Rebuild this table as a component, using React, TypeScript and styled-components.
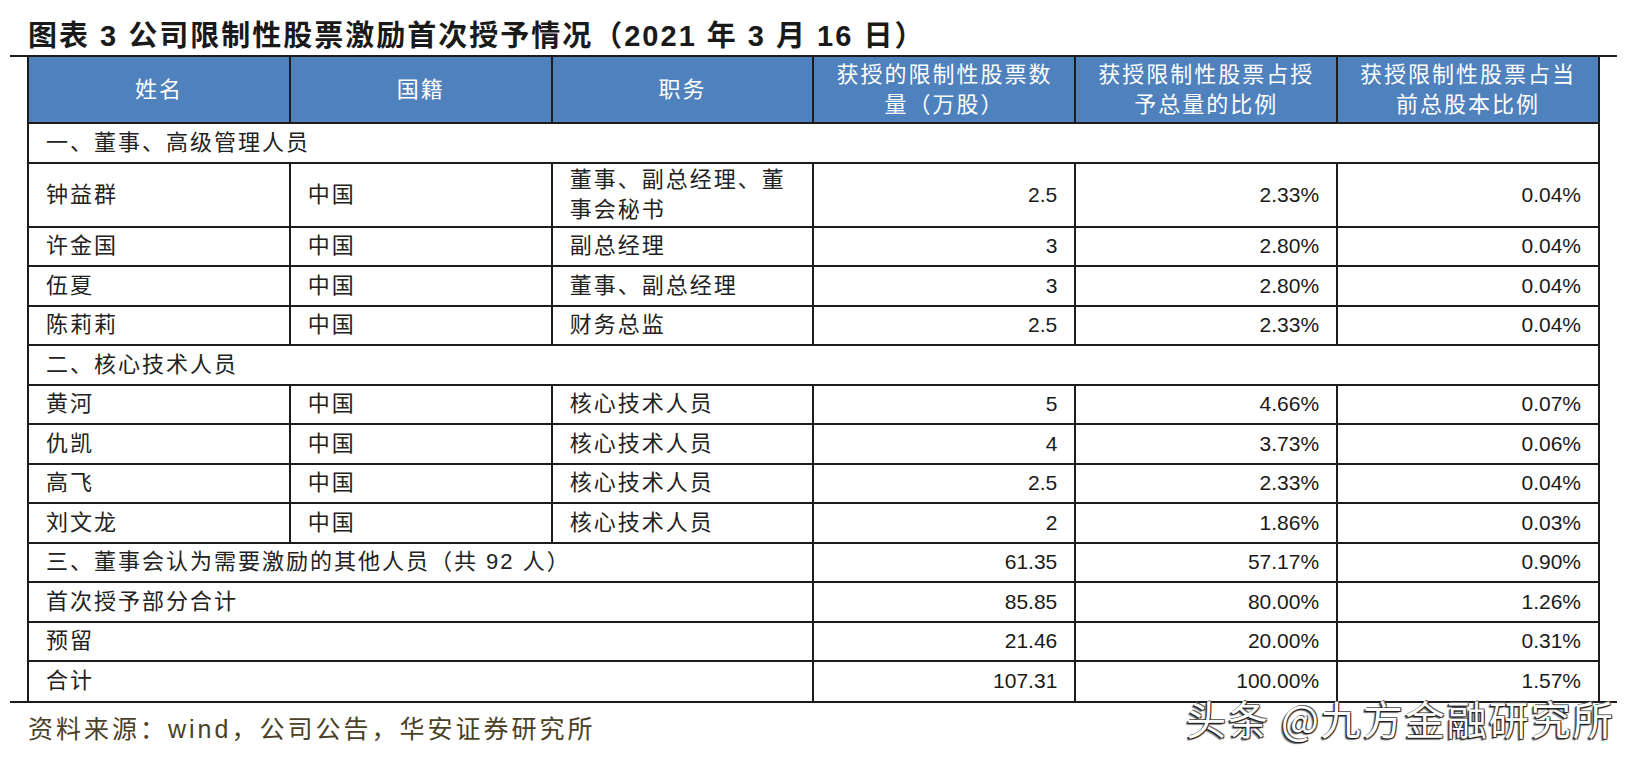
import React from 'react'
import styled, { createGlobalStyle } from 'styled-components'

type Person = {
  name: string;
  nation: string;
  job: string;
  shares: string;
  ofGrant: string;
  ofTotal: string;
}

type Total = {
  label: string;
  shares: string;
  ofGrant: string;
  ofTotal: string;
}

const managers: Person[] = [
  { name: '钟益群', nation: '中国', job: '董事、副总经理、董事会秘书', shares: '2.5', ofGrant: '2.33%', ofTotal: '0.04%' },
  { name: '许金国', nation: '中国', job: '副总经理', shares: '3', ofGrant: '2.80%', ofTotal: '0.04%' },
  { name: '伍夏', nation: '中国', job: '董事、副总经理', shares: '3', ofGrant: '2.80%', ofTotal: '0.04%' },
  { name: '陈莉莉', nation: '中国', job: '财务总监', shares: '2.5', ofGrant: '2.33%', ofTotal: '0.04%' },
]

const techStaff: Person[] = [
  { name: '黄河', nation: '中国', job: '核心技术人员', shares: '5', ofGrant: '4.66%', ofTotal: '0.07%' },
  { name: '仇凯', nation: '中国', job: '核心技术人员', shares: '4', ofGrant: '3.73%', ofTotal: '0.06%' },
  { name: '高飞', nation: '中国', job: '核心技术人员', shares: '2.5', ofGrant: '2.33%', ofTotal: '0.04%' },
  { name: '刘文龙', nation: '中国', job: '核心技术人员', shares: '2', ofGrant: '1.86%', ofTotal: '0.03%' },
]

const totals: Total[] = [
  { label: '三、董事会认为需要激励的其他人员（共 92 人）', shares: '61.35', ofGrant: '57.17%', ofTotal: '0.90%' },
  { label: '首次授予部分合计', shares: '85.85', ofGrant: '80.00%', ofTotal: '1.26%' },
  { label: '预留', shares: '21.46', ofGrant: '20.00%', ofTotal: '0.31%' },
  { label: '合计', shares: '107.31', ofGrant: '100.00%', ofTotal: '1.57%' },
]

const headers = [
  '姓名',
  '国籍',
  '职务',
  '获授的限制性股票数量（万股）',
  '获授限制性股票占授予总量的比例',
  '获授限制性股票占当前总股本比例',
]

const line = '#1c1c1c'

const GlobalStyle = createGlobalStyle`
  html, body {
    margin: 0;
    background: #fff;
  }
  body {
    font-family: "Liberation Sans", "Noto Sans CJK SC", sans-serif;
    color: #1f1f1f;
  }
`

const Page = styled.div`
  position: relative;
  width: 1629px;
  height: 765px;
  padding-top: 18px;
  box-sizing: border-box;
  overflow: hidden;
`

const Title = styled.h1`
  margin: 0 0 1px 28px;
  font-size: 29px;
  line-height: 36px;
  font-weight: 700;
  letter-spacing: 2px;
  color: #1a1a1a;
  white-space: nowrap;
`

const Frame = styled.div`
  margin: 0 12px 0 10px;
  padding: 0 17px;
  border-top: 2px solid ${line};
  border-bottom: 2px solid ${line};
`

const Table = styled.table`
  width: 100%;
  border-collapse: collapse;
  table-layout: fixed;

  tbody tr:last-child td {
    border-bottom: none;
  }
`

const HeadRow = styled.tr`
  height: 66px;
`

const HeadCell = styled.th`
  background: #4f81bd;
  color: #fff;
  font-size: 22px;
  line-height: 30px;
  font-weight: 400;
  letter-spacing: 2px;
  text-align: center;
  padding: 1px 17px;
  border: 2px solid ${line};
  border-top: none;
`

const Row = styled.tr`
  height: 39.5px;
`

const TextCell = styled.td`
  font-size: 22px;
  line-height: 30px;
  letter-spacing: 2px;
  text-align: left;
  padding: 1px 17px;
  border: 2px solid ${line};
  color: #222;
`

const NumCell = styled.td`
  font-size: 21px;
  line-height: 30px;
  text-align: right;
  padding: 1px 17px;
  border: 2px solid ${line};
  color: #1a1a1a;
`

const Source = styled.p`
  margin: 6px 0 0 28px;
  font-size: 25px;
  line-height: 40px;
  letter-spacing: 3px;
  color: #4a4126;
`

const Watermark = styled.div`
  position: absolute;
  top: 703px;
  left: 1186px;
  font-family: "Noto Sans CJK SC", sans-serif;
  font-size: 40px;
  line-height: 30px;
  letter-spacing: 2px;
  color: #fff;
  text-shadow: -1px 1px 0 #222, 1px 1px 1px #222, -2px 2px 1px rgba(0, 0, 0, 0.55), 1px -1px 0 #666;
  white-space: nowrap;
`

const PersonRow = ({ p }: { p: Person }) => (
  <Row>
    <TextCell>{p.name}</TextCell>
    <TextCell>{p.nation}</TextCell>
    <TextCell>{p.job}</TextCell>
    <NumCell>{p.shares}</NumCell>
    <NumCell>{p.ofGrant}</NumCell>
    <NumCell>{p.ofTotal}</NumCell>
  </Row>
)

const SectionRow = ({ label }: { label: string }) => (
  <Row>
    <TextCell colSpan={6}>{label}</TextCell>
  </Row>
)

const TotalRow = ({ t }: { t: Total }) => (
  <Row>
    <TextCell colSpan={3}>{t.label}</TextCell>
    <NumCell>{t.shares}</NumCell>
    <NumCell>{t.ofGrant}</NumCell>
    <NumCell>{t.ofTotal}</NumCell>
  </Row>
)

export default function App() {
  return (
    <Page>
      <GlobalStyle />
      <Title>图表 3 公司限制性股票激励首次授予情况（2021 年 3 月 16 日）</Title>
      <Frame>
        <Table>
          <thead>
            <HeadRow>
              {headers.map(h => (
                <HeadCell key={h}>{h}</HeadCell>
              ))}
            </HeadRow>
          </thead>
          <tbody>
            <SectionRow label="一、董事、高级管理人员" />
            {managers.map(p => <PersonRow key={p.name} p={p} />)}
            <SectionRow label="二、核心技术人员" />
            {techStaff.map(p => <PersonRow key={p.name} p={p} />)}
            {totals.map(t => <TotalRow key={t.label} t={t} />)}
          </tbody>
        </Table>
      </Frame>
      <Source>资料来源：wind，公司公告，华安证券研究所</Source>
      <Watermark>头条 @九方金融研究所</Watermark>
    </Page>
  )
}
